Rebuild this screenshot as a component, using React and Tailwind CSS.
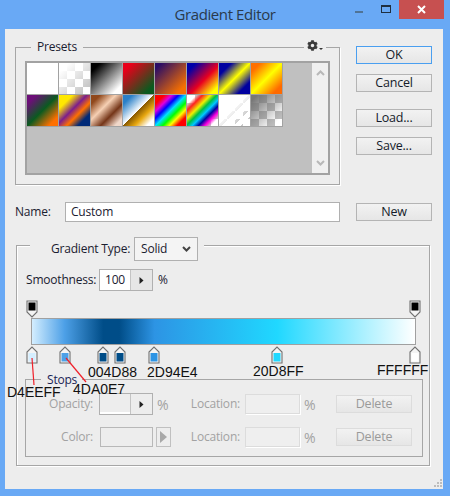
import React from "react";
import { FaCog } from "react-icons/fa";

const sw1 = [
  "bg-white",
  "bg-[linear-gradient(135deg,#fff_15%,transparent_85%),repeating-conic-gradient(#c8c8c8_0_25%,#fff_0_50%)] bg-[length:auto,16px_16px]",
  "bg-[linear-gradient(135deg,#000_15%,#fff_85%)]",
  "bg-[linear-gradient(135deg,#e8001a_15%,#0a5a1e_85%)]",
  "bg-[linear-gradient(135deg,#2a0d66_10%,#f77000_85%)]",
  "bg-[linear-gradient(135deg,#0000a8_15%,#e80020_55%,#ffff00_88%)]",
  "bg-[linear-gradient(135deg,#0000a0_20%,#ffff00_50%,#0000a0_80%)]",
  "bg-[linear-gradient(135deg,#ff7000_15%,#ffff00_50%,#ff6a00_85%)]",
];
const sw2 = [
  "bg-[linear-gradient(135deg,#6c0f78_15%,#0a5a20_50%,#ff7000_85%)]",
  "bg-[linear-gradient(135deg,#ffe800_22%,#7c1f8c_45%,#ff7000_62%,#002a78_80%)]",
  "bg-[linear-gradient(135deg,#90481c_15%,#f6d0b4_40%,#743518_65%,#f0d8ca_88%)]",
  "bg-[linear-gradient(135deg,#2a80c8_15%,#ffffff_49%,#8a5a00_50%,#e8a810_68%,#ffffff_88%)]",
  "bg-[linear-gradient(135deg,#ff0000_15%,#e000e0_27%,#0000ff_38%,#00e0ff_50%,#00ff00_62%,#ffff00_73%,#ff0000_85%)]",
  "bg-[linear-gradient(135deg,transparent_15%,#ff2020_25%,#f0f000_38%,#00c040_48%,#00c8ff_58%,#0000a0_68%,#ff00e0_78%,transparent_88%),repeating-conic-gradient(#c8c8c8_0_25%,#fff_0_50%)] bg-[length:auto,16px_16px]",
  "bg-[repeating-linear-gradient(135deg,#fff_0_5px,transparent_5px_8px),linear-gradient(135deg,#fff_40%,transparent_80%),repeating-conic-gradient(#c8c8c8_0_25%,#fff_0_50%)] bg-[length:auto,auto,16px_16px]",
  "bg-[linear-gradient(135deg,#777_10%,transparent_85%),repeating-conic-gradient(#bdbdbd_0_25%,#fff_0_50%)] bg-[length:auto,16px_16px]",
];

function PsButton({ children, disabled, active }) {
  const tone = disabled
    ? "border-[#dcdcdc] text-[#9a9a9a]"
    : active
    ? "border-[#4a9ff0] text-[#141b2a]"
    : "border-[#b4b4b4] text-[#141b2a]";
  return (
    <div className={`w-[76px] h-[18px] border flex items-center justify-center bg-[linear-gradient(#f2f2f2,#e6e6e6)] text-[12.5px] leading-none ${tone}`}>
      {children}
    </div>
  );
}

function TopMarker({ left }) {
  return (
    <svg className={`absolute top-0 ${left}`} width="12" height="18" viewBox="0 0 12 18">
      <path d="M1 1H11V12L6 17L1 12Z" fill="#f4f4f4" stroke="#707070" strokeWidth="1.1" />
      <rect x="2.5" y="2.5" width="7" height="8" fill="#000" />
    </svg>
  );
}

function BottomMarker({ left, color }) {
  return (
    <svg className={`absolute top-0 ${left}`} width="12" height="18" viewBox="0 0 12 18">
      <path d="M1 17H11V6L6 1L1 6Z" fill="#f4f4f4" stroke="#707070" strokeWidth="1.1" />
      <rect x="2.5" y="7" width="7" height="8.5" fill={color} />
    </svg>
  );
}

function Arrow() {
  return (
    <svg width="5" height="7" viewBox="0 0 5 7">
      <path d="M0.5 0L4.5 3.5L0.5 7Z" fill="#222" />
    </svg>
  );
}

function Hex({ className, children }) {
  return (
    <div className={`absolute text-[14px] tracking-normal leading-none text-[#111] font-['Liberation_Sans',sans-serif] ${className}`}>
      {children}
    </div>
  );
}

export default function App() {
  return (
    <div className="relative w-[450px] h-[496px] bg-[#69a9f5] overflow-hidden font-['Open_Sans',sans-serif] text-[12px] tracking-[-0.2px] text-[#1a2030]">
      {/* title bar */}
      <div className="relative h-[29px] flex items-center justify-center">
        <span className="text-[15px] leading-none -mt-[1px] text-[#2a3a4c] tracking-[-0.4px]">Gradient Editor</span>
        <div className="absolute right-[6px] top-0 flex items-start">
          <div className="w-[8px] h-[2px] bg-[#4f7396] mt-[11px] mr-[18px]" />
          <div className="w-[10px] h-[8px] border border-t-2 border-[#1f2f40] mt-[5px] mr-[8px]" />
          <div className="w-[45px] h-[19px] bg-[#c75050] flex items-center justify-center">
            <svg width="9" height="9" viewBox="0 0 9 9">
              <path d="M1 1L8 8M8 1L1 8" stroke="#fff" strokeWidth="2" />
            </svg>
          </div>
        </div>
      </div>

      {/* client area */}
      <div className="relative ml-[5px] w-[438px] h-[460px] bg-[#ededed] flex flex-col">
        <div className="flex pt-[17px]">
          {/* presets */}
          <div className="relative ml-[10px] mt-[1px] w-[325px] h-[138px] border border-[#a6a6a6] shadow-[1px_1px_0_#fff]">
            <div className="absolute -top-[9px] left-[15px] px-[6px] bg-[#ededed] leading-[16px]">Presets</div>
            <div className="absolute -top-[8px] right-[13px] pl-[3px] pr-[3px] bg-[#ededed] flex items-end text-[#3a3a3a]">
              <FaCog size={11} />
              <svg className="ml-[1px] mb-[1px]" width="4" height="2" viewBox="0 0 4 2"><path d="M0 0H4L2 2Z" fill="#333" /></svg>
            </div>
            <div className="ml-[9px] mt-[13px] w-[305px] h-[114px] border-2 border-[#a2a2a2] bg-[#c0c0c0] flex justify-between">
              <div className="w-[256px] self-start grid grid-cols-[repeat(8,31px)] gap-[1px] bg-[#a2a2a2] pb-[1px] pr-[1px]">
                {sw1.map((c, i) => (
                  <div key={i} className={`h-[31px] ${c}`} />
                ))}
                {sw2.map((c, i) => (
                  <div key={i} className={`h-[31px] ${c}`} />
                ))}
              </div>
              <div className="w-[16px] bg-[#f0f0f0] flex flex-col justify-between items-center py-[7px]">
                <svg width="9" height="6" viewBox="0 0 9 6"><path d="M1 5L4.5 1.5L8 5" fill="none" stroke="#b8b8b8" strokeWidth="2" /></svg>
                <svg width="9" height="6" viewBox="0 0 9 6"><path d="M1 1L4.5 4.5L8 1" fill="none" stroke="#b8b8b8" strokeWidth="2" /></svg>
              </div>
            </div>
          </div>
          {/* buttons */}
          <div className="ml-[16px] flex flex-col">
            <PsButton active>OK</PsButton>
            <div className="mt-[10px]"><PsButton>Cancel</PsButton></div>
            <div className="mt-[17px]"><PsButton>Load...</PsButton></div>
            <div className="mt-[10px]"><PsButton>Save...</PsButton></div>
          </div>
        </div>

        {/* name */}
        <div className="flex items-center mt-[17px] ml-[10px] h-[20px]">
          <div className="w-[50px]">Name:</div>
          <div className="w-[275px] h-[20px] border border-[#b0b0b0] bg-white flex items-center pl-[5px]">Custom</div>
          <div className="ml-[16px]"><PsButton>New</PsButton></div>
        </div>

        {/* gradient group */}
        <div className="mt-[23px] ml-[11px] w-[414px] h-[221px] border border-[#a6a6a6] shadow-[1px_1px_0_#fff,inset_1px_1px_0_#fff]">
          <div className="-mt-[9px] ml-[13px] w-[174px] pl-[21px] bg-[#ededed] flex items-center h-[24px]">
            <div className="w-[83px]">Gradient Type:</div>
            <div className="w-[64px] h-[24px] border border-[#b0b0b0] bg-[#f4f4f4] flex items-center justify-between pl-[6px] pr-[6px]">
              <span>Solid</span>
              <svg width="9" height="6" viewBox="0 0 9 6"><path d="M1 1L4.5 4.5L8 1" fill="none" stroke="#444" strokeWidth="2" /></svg>
            </div>
          </div>

          <div className="flex items-center mt-[8px] ml-[9px] h-[22px]">
            <div className="w-[73px]">Smoothness:</div>
            <div className="w-[54px] h-[22px] border border-[#b0b0b0] flex bg-white">
              <div className="w-[30px] flex items-center justify-center">100</div>
              <div className="flex-1 border-l border-[#c4c4c4] bg-[#e6e6e6] flex items-center justify-center"><Arrow /></div>
            </div>
            <div className="ml-[5px]">%</div>
          </div>

          <div className="relative mt-[9px] h-[18px]">
            <TopMarker left="left-[9px]" />
            <TopMarker left="left-[392px]" />
          </div>
          <div className="ml-[14px] w-[385px] h-[27px] border border-[#a0a0a0] bg-[linear-gradient(90deg,#d4eeff_0%,#4da0e7_8.5%,#004d88_18.6%,#004d88_22.8%,#2d94e4_32%,#20d8ff_64%,#ffffff_100%)]" />
          <div className="relative h-[18px] mt-[1px]">
            <BottomMarker left="left-[9px]" color="#d4eeff" />
            <BottomMarker left="left-[42px]" color="#4da0e7" />
            <BottomMarker left="left-[80px]" color="#004d88" />
            <BottomMarker left="left-[97px]" color="#004d88" />
            <BottomMarker left="left-[131px]" color="#2d94e4" />
            <BottomMarker left="left-[254px]" color="#20d8ff" />
            <BottomMarker left="left-[392px]" color="#ffffff" />
          </div>

          {/* stops */}
          <div className="relative mt-[15px] ml-[8px] w-[398px] h-[78px] border border-[#a6a6a6] text-[#a2a2a2]">
            <div className="absolute -top-[6px] left-[15px] w-[41px] pl-[6px] bg-[#ededed] leading-[11px] text-[#1a1f55]">Stops</div>
            <div className="flex items-center mt-[13px] h-[22px]">
              <div className="w-[67px] text-right">Opacity:</div>
              <div className="ml-[6px] w-[54px] h-[22px] border border-[#b0b0b0] flex">
                <div className="w-[30px] border-b-2 border-white" />
                <div className="flex-1 border-l border-[#c4c4c4] flex items-center justify-center"><Arrow /></div>
              </div>
              <div className="ml-[4px] w-[13px] text-[14px]">%</div>
              <div className="w-[70px] text-right">Location:</div>
              <div className="ml-[5px] w-[55px] h-[20px] border border-[#dcdcdc] bg-[#efefef] shadow-[1px_1px_0_#fff]" />
              <div className="ml-[4px] w-[32px] text-[14px]">%</div>
              <PsButton disabled>Delete</PsButton>
            </div>
            <div className="flex items-center mt-[12px] h-[20px]">
              <div className="w-[67px] text-right">Color:</div>
              <div className="ml-[7px] w-[53px] h-[20px] border border-[#b8b8b8]" />
              <div className="ml-[3px] w-[15px] h-[20px] border border-[#c0c0c0] flex items-center justify-center">
                <svg width="7" height="12" viewBox="0 0 7 12"><path d="M0 0L7 6L0 12Z" fill="#a8a8a8" /></svg>
              </div>
              <div className="w-[69px] text-right">Location:</div>
              <div className="ml-[5px] w-[55px] h-[20px] border border-[#dcdcdc] bg-[#efefef] shadow-[1px_1px_0_#fff]" />
              <div className="ml-[4px] w-[32px] text-[14px]">%</div>
              <PsButton disabled>Delete</PsButton>
            </div>
          </div>
        </div>

        {/* resize grip */}
        <svg className="absolute right-0 bottom-[1px]" width="10" height="10" viewBox="0 0 10 10" fill="#bdbdbd">
          <rect x="7" y="1" width="2" height="2" />
          <rect x="4" y="4" width="2" height="2" />
          <rect x="7" y="4" width="2" height="2" />
          <rect x="1" y="7" width="2" height="2" />
          <rect x="4" y="7" width="2" height="2" />
          <rect x="7" y="7" width="2" height="2" />
        </svg>
      </div>

      {/* annotations */}
      <svg className="absolute left-0 top-0 pointer-events-none" width="450" height="496" viewBox="0 0 450 496">
        <path d="M32 358L34 385" stroke="#f0202a" strokeWidth="1.2" />
        <path d="M66 358L86 382" stroke="#f0202a" strokeWidth="1.2" />
      </svg>
      <Hex className="left-[7px] top-[385px]">D4EEFF</Hex>
      <Hex className="left-[73px] top-[382px]">4DA0E7</Hex>
      <Hex className="left-[88px] top-[365px]">004D88</Hex>
      <Hex className="left-[147px] top-[365px]">2D94E4</Hex>
      <Hex className="left-[253px] top-[364px]">20D8FF</Hex>
      <Hex className="left-[377px] top-[363px]">FFFFFF</Hex>
    </div>
  );
}
